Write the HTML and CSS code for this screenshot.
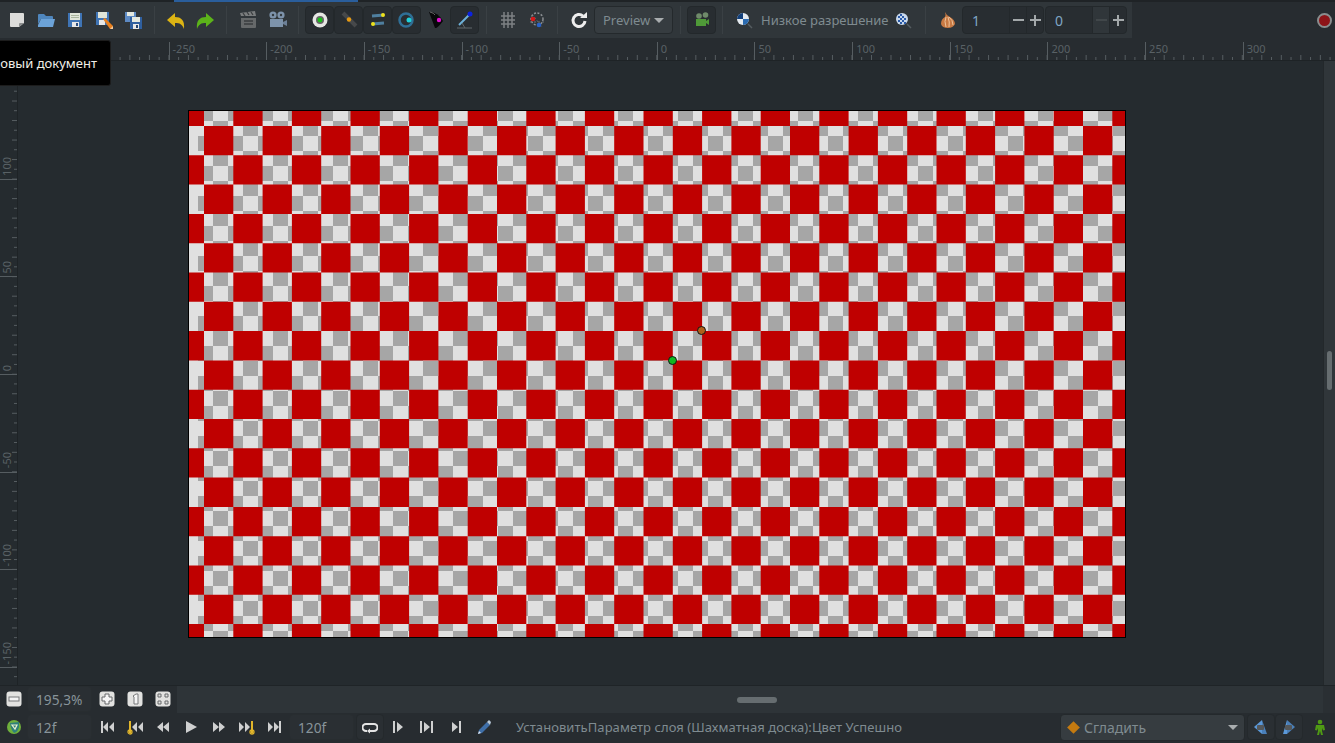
FILE: index.html
```html
<!DOCTYPE html>
<html lang="ru">
  <head>
    <meta charset="UTF-8" />
    <title>Synfig Studio</title>
    <link rel="stylesheet" href="styles.css">
  </head>
  <body>
    <div class="app">
      <div class="tab-strip"><div class="tab-active"></div></div>

      <div class="top-row">
        <div class="toolbar">
          <div class="tool"><svg viewBox="0 0 20 20"><path d="M3 3h13q1 0 1 1v9l-5 4H4q-1 0-1-1z" fill="#dcdcda"/><path d="M12 17v-3q0-1 1-1h4z" fill="#8a8c8c"/></svg></div>
          <div class="tool"><svg viewBox="0 0 20 20"><path d="M2 5q0-1 1-1h5l2 2h6q1 0 1 1v2H5l-3 5z" fill="#4f86bd"/><path d="M5 9h14l-2 8H2v-2z" fill="#6ca3d8"/></svg></div>
          <div class="tool"><svg viewBox="0 0 20 20"><path d="M3 3h14v14H3z" fill="#3f74b5"/><path d="M5 3h10v7H5z" fill="#dfe4d8"/><path d="M6 5h8v1H6zM6 7h8v1H6z" fill="#a8b49c"/><path d="M7 12h7v5H7z" fill="#e8e8e8"/><path d="M11 13h2v3h-2z" fill="#2c4f80"/></svg></div>
          <div class="tool"><svg viewBox="0 0 20 20"><path d="M2 2h13v13H2z" fill="#3f74b5"/><path d="M4 2h9v6H4z" fill="#dfe4d8"/><path d="M5 10h6v5H5z" fill="#e8e8e8"/><path d="M9 9l2-1 8 8-1 3-2 0z" fill="#e8801e"/><path d="M16 19l3-3 0 3z" fill="#efc9a0"/></svg></div>
          <div class="tool"><svg viewBox="0 0 20 20"><path d="M2 2h11v10H2z" fill="#5d8ac4"/><path d="M4 2h7v4H4z" fill="#e4e8e0"/><path d="M7 7h12v12H7z" fill="#2f5f9f"/><path d="M9 7h8v5H9z" fill="#e4e8e0"/><path d="M10 14h6v5h-6z" fill="#e8e8e8"/><path d="M13 15h2v3h-2z" fill="#24446f"/></svg></div>
          <div class="sep"></div>
          <div class="tool"><svg viewBox="0 0 20 20"><path d="M9 2v4c6 0 10 3 9 12-2-5-4-6-9-6v4L1 9z" fill="#dcb414" transform="translate(0 1)"/></svg></div>
          <div class="tool"><svg viewBox="0 0 20 20"><path d="M11 2v4C5 6 1 9 2 18c2-5 4-6 9-6v4l8-7z" fill="#5cb31a" transform="translate(0 1)"/></svg></div>
          <div class="sep"></div>
          <div class="tool"><svg viewBox="0 0 20 20"><path d="M3 8h15v9q0 1-1 1H4q-1 0-1-1z" fill="#66696a"/><path d="M2 3l15-2 1 5H3z" fill="#7a7d7e"/><path d="M5 3l2 3M9 2l2 3M13 2l2 3M6 11h9M6 14h9" stroke="#3a3d3f" stroke-width="1.300" fill="none"/></svg></div>
          <div class="tool"><svg viewBox="0 0 20 20"><circle cx="6" cy="5" r="3.600" fill="#7d93ab"/><circle cx="14" cy="5" r="3.600" fill="#7d93ab"/><circle cx="6" cy="5" r="1.200" fill="#333a3f"/><circle cx="14" cy="5" r="1.200" fill="#333a3f"/><path d="M3 9h13v8H3z" fill="#7d93ab"/><path d="M16 12l4-2v6l-4-2z" fill="#6c8097"/></svg></div>
          <div class="sep"></div>
          <div class="tool tool-on"><svg viewBox="0 0 20 20"><circle cx="10" cy="10" r="7.500" fill="#e6e6e4"/><circle cx="10" cy="10" r="4" fill="#666"/><circle cx="10" cy="10" r="2.400" fill="#18c018"/></svg></div>
          <div class="tool tool-on"><svg viewBox="0 0 20 20"><path d="M4 3l13 13" stroke="#46484a" stroke-width="4"/><circle cx="10" cy="9.500" r="2.200" fill="#e89a10"/></svg></div>
          <div class="tool tool-on"><svg viewBox="0 0 20 20"><path d="M4 6l12-1M4 14l12-1" stroke="#4f7f9f" stroke-width="3"/><circle cx="15" cy="5" r="2" fill="#eee21a"/><circle cx="5" cy="14" r="2" fill="#eee21a"/></svg></div>
          <div class="tool tool-on"><svg viewBox="0 0 20 20"><circle cx="9" cy="10" r="6.500" fill="none" stroke="#2f6f96" stroke-width="2.500"/><circle cx="12" cy="10" r="2.500" fill="#20d0d8"/></svg></div>
          <div class="tool"><svg viewBox="0 0 20 20"><path d="M3 2q9 0 14 9-6 8-8 7Q6 10 3 2z" fill="#08080a"/><path d="M4 2q4 1 5 3" stroke="#666" fill="none"/><circle cx="13" cy="10" r="2.200" fill="#e010d0"/></svg></div>
          <div class="tool tool-on"><svg viewBox="0 0 20 20"><path d="M4 15L14 5" stroke="#6cb0d8" stroke-width="2"/><circle cx="15" cy="4" r="2.500" fill="#0c22e0"/><path d="M2 18h15M10 18l-3-5" stroke="#60686c" fill="none"/></svg></div>
          <div class="sep"></div>
          <div class="tool"><svg viewBox="0 0 20 20"><path d="M3 6h14M3 10h14M3 14h14M6 2v16M10 2v16M14 2v16" stroke="#7d8184" stroke-width="1.500" fill="none"/></svg></div>
          <div class="tool"><svg viewBox="0 0 20 20"><circle cx="10" cy="9" r="6" fill="none" stroke="#8b8f92" stroke-width="1.500" stroke-dasharray="2 1.500"/><path d="M3 12h16M5 4l10 13" stroke="#6a6e70" stroke-dasharray="2 2"/><circle cx="6" cy="9" r="2.300" fill="#d81818"/><circle cx="12" cy="15" r="2.300" fill="#2a62c8"/></svg></div>
          <div class="sep sep-narrow"></div>
          <div class="tool"><svg viewBox="0 0 20 20"><path d="M16 11a6 6 0 1 1-2-5" fill="none" stroke="#eeeeee" stroke-width="3"/><path d="M11 8h7V2z" fill="#eeeeee"/></svg></div>
          <div class="combo combo-preview"><span>Preview</span><i class="caret"></i></div>
          <div class="sep"></div>
          <div class="tool tool-on"><svg viewBox="0 0 20 20"><circle cx="7" cy="6" r="2.800" fill="#6f8a6a"/><circle cx="13.500" cy="5" r="2.800" fill="#6f8a6a"/><path d="M4 9h10v7H4z" fill="#4f9a38"/><path d="M14 11l3-2v6l-3-2z" fill="#4f9a38"/></svg></div>
          <div class="sep sep-narrow"></div>
          <div class="tool"><svg viewBox="0 0 20 20"><circle cx="9" cy="9" r="6" fill="#e4eaf0"/><path d="M9 3a6 6 0 0 0-6 6h6z" fill="#123f7a"/><path d="M9 9h6a6 6 0 0 1-6 6z" fill="#2a6ab0"/><path d="M14 14l4 4" stroke="#555c60" stroke-width="1.500"/></svg></div>
          <span class="res-label">Низкое разрешение</span>
          <div class="tool"><svg viewBox="0 0 20 20"><circle cx="9" cy="9" r="6" fill="#c8d8ec"/><path d="M5 6h2v2H5zM9 6h2v2H9zM7 8h2v2H7zM11 8h2v2h-2zM5 10h2v2H5zM9 10h2v2H9zM7 12h2v2H7z M7 4h2v2H7z M11 12h2v2h-2z" fill="#2a5aa8"/><path d="M14 14l4 4" stroke="#555c60" stroke-width="1.500"/></svg></div>
          <div class="sep sep-onion"></div>
          <div class="tool"><svg viewBox="0 0 20 20"><path d="M7 2q1 3 5 5 5 3 5 7-2 4-7 4-6 0-7-4 0-5 4-7 1-2 0-5z" fill="#c87a44"/><path d="M8 7Q6 11 8 17M10 7q2 5 1 10M11 7q4 3 4 8" stroke="#eec39a" fill="none"/></svg></div>
          <div class="spin">
            <span class="spin-val">1</span>
            <span class="spin-btn spin-minus"></span>
            <span class="spin-btn spin-plus"></span>
          </div>
          <div class="spin">
            <span class="spin-val">0</span>
            <span class="spin-btn spin-minus spin-off"></span>
            <span class="spin-btn spin-plus"></span>
          </div>
        </div>
        <div class="rec-area"><div class="rec"></div></div>
      </div>

      <div class="h-ruler">
        <div class="mark">-300</div>
        <div class="mark">-250</div>
        <div class="mark">-200</div>
        <div class="mark">-150</div>
        <div class="mark">-100</div>
        <div class="mark">-50</div>
        <div class="mark">0</div>
        <div class="mark">50</div>
        <div class="mark">100</div>
        <div class="mark">150</div>
        <div class="mark">200</div>
        <div class="mark">250</div>
        <div class="mark">300</div>
      </div>

      <div class="middle">
        <div class="v-ruler">
          <div class="v-first"></div>
          <div class="v-mark"><span>100</span></div>
          <div class="v-mark"><span>50</span></div>
          <div class="v-mark"><span>0</span></div>
          <div class="v-mark"><span>-50</span></div>
          <div class="v-mark"><span>-100</span></div>
          <div class="v-mark"><span>-150</span></div>
        </div>
        <div class="work">
          <div class="canvas" id="canvas">
            <div class="dot dot-green"></div>
            <div class="dot dot-orange"></div>
          </div>
        </div>
        <div class="v-scroll"><div class="v-thumb"></div></div>
      </div>

      <div class="scroll-row">
        <div class="zoom-tools">
          <div class="slot"><svg class="white-btn" viewBox="0 0 16 16"><rect x="0.500" y="0.500" width="15" height="15" rx="3" fill="#e2e2e0"/><rect x="3" y="6" width="10" height="4" fill="#f4f4f4" stroke="#77797a"/></svg></div>
          <div class="value-box value-zoom">195,3%</div>
          <div class="slot"><svg class="white-btn" viewBox="0 0 16 16"><rect x="0.500" y="0.500" width="15" height="15" rx="3" fill="#e2e2e0"/><path d="M6 3h4v3h3v4h-3v3H6v-3H3V6h3z" fill="#f6f6f6" stroke="#66686a"/></svg></div>
          <div class="slot"><svg class="white-btn" viewBox="0 0 16 16"><rect x="0.500" y="0.500" width="15" height="15" rx="3" fill="#e2e2e0"/><path d="M6 5l3-2h2v10H7V6z" fill="#f4f4f4" stroke="#77797a"/></svg></div>
          <div class="slot"><svg class="white-btn" viewBox="0 0 16 16"><rect x="0.500" y="0.500" width="15" height="15" rx="3" fill="#e2e2e0"/><path d="M3 3h3v3H3zM10 3h3v3h-3zM3 10h3v3H3zM10 10h3v3h-3z" fill="none" stroke="#66686a"/></svg></div>
        </div>
        <div class="h-scroll"><div class="h-thumb"></div></div>
        <div class="scroll-corner"></div>
      </div>

      <div class="status">
        <div class="slot"><svg viewBox="0 0 16 16"><circle cx="8" cy="8" r="7" fill="#6fb03c"/><path d="M4 4l9-1v5q-1 5-5 6-3-3-4-10z" fill="#2f7f7a"/><path d="M6 6h5l-2 4z" fill="none" stroke="#e8f0d0" stroke-width="1.200"/></svg></div>
        <div class="value-box value-time">12f</div>
        <div class="slot"><svg class="tp" viewBox="0 0 16 16"><path d="M2 2h2v12H2zM9 3v10L4 8zM15 3v10L10 8z"/></svg></div>
        <div class="slot"><svg class="tp" viewBox="0 0 16 16"><path d="M2 2h2v12H2z" fill="#e2b62a"/><circle cx="3" cy="13" r="2" fill="none" stroke="#e2b62a" stroke-width="1.300"/><path d="M10 3v10L5 8zM16 3v10l-5-5z"/></svg></div>
        <div class="slot"><svg class="tp" viewBox="0 0 16 16"><path d="M8 3v10L2 8zM14 3v10L8 8z"/></svg></div>
        <div class="slot"><svg class="tp" viewBox="0 0 16 16"><path d="M3 2v12l11-6z"/></svg></div>
        <div class="slot"><svg class="tp" viewBox="0 0 16 16"><path d="M2 3v10l6-5zM8 3v10l6-5z"/></svg></div>
        <div class="slot"><svg class="tp" viewBox="0 0 16 16"><path d="M0 3v10l5-5zM6 3v10l5-5z"/><path d="M12 2h2v12h-2z" fill="#e2b62a"/><circle cx="13" cy="13" r="2" fill="none" stroke="#e2b62a" stroke-width="1.300"/></svg></div>
        <div class="slot"><svg class="tp" viewBox="0 0 16 16"><path d="M1 3v10l5-5zM7 3v10l5-5zM12 2h2v12h-2z"/></svg></div>
        <div class="value-box value-end">120f</div>
        <div class="slot slot-on slot-loop"><svg viewBox="0 0 16 16"><path d="M5 12H4a3.500 3.500 0 0 1 0-7h8a3.500 3.500 0 0 1 0 7H7" fill="none" stroke="#e4e4e4" stroke-width="2"/><path d="M8 9.500v5L5 12z" fill="#e4e4e4"/></svg></div>
        <div class="slot"><svg class="tp" viewBox="0 0 16 16"><path d="M3 2h2v12H3zM7 3v10l6-5z"/></svg></div>
        <div class="slot slot-wide"><svg class="tp" viewBox="0 0 16 16"><path d="M1 2h2v12H1zM5 3v10l6-5zM12 2h2v12h-2z"/></svg></div>
        <div class="slot slot-wide"><svg class="tp" viewBox="0 0 16 16"><path d="M4 3v10l6-5zM11 2h2v12h-2z"/></svg></div>
        <div class="slot"><svg viewBox="0 0 16 16"><path d="M2 15l1-4 8-8 3 3-8 8z" fill="#3f6fa8"/><path d="M11 3l2-2 2 2-1 3z" fill="#b8c8d8"/><path d="M2 15l1-3 2 2z" fill="#dfe6ee"/></svg></div>
        <div class="message">УстановитьПараметр слоя (Шахматная доска):Цвет Успешно</div>
        <div class="combo combo-blend">
          <i class="diamond"></i>
          <span>Сгладить</span>
          <i class="caret"></i>
        </div>
        <div class="slot slot-on"><svg viewBox="0 0 16 16"><path d="M9 1v14L1 8z" fill="#5b98d8"/><path d="M9 1l5 14H9z" fill="#4a7fb8"/><rect x="4" y="6" width="7" height="5" rx="1" fill="#55585a"/></svg></div>
        <div class="slot slot-on"><svg viewBox="0 0 16 16"><path d="M6 1v14l8-7z" fill="#4a7fb8"/><path d="M6 1L2 15h4z" fill="#5b98d8"/><rect x="4" y="6" width="7" height="5" rx="1" fill="#55585a"/></svg></div>
        <div class="slot slot-runner"><svg viewBox="0 0 16 16"><circle cx="8" cy="3" r="2.300" fill="#4f9a14"/><path d="M4 6h8l1 5-2 .5L10 9v3l1 4H9L8 12l-1 4H5l1-4V9l-1 2.500L3 11z" fill="#4f9a14"/></svg></div>
      </div>
    </div>

    <div class="tooltip">Новый документ</div>
    <script src="canvas.js"></script>
  </body>
</html>
```

FILE: styles.css
```css
* {
  box-sizing: border-box;
}

html,
body {
  margin: 0;
  height: 100%;
  overflow: hidden;
}

body {
  font-family: "Noto Sans", sans-serif;
  font-size: 13px;
  color: #7f8b90;
  background-color: #252b2f;
}

.app {
  display: flex;
  flex-direction: column;
  height: 743px;
}

/* top */
.tab-strip {
  height: 2px;
  background-color: #1f2326;
  padding-left: 174px;
}
.tab-active {
  width: 184px;
  height: 2px;
  background-color: #2a5e9c;
}

.top-row {
  display: flex;
  height: 36px;
  background-color: #272c30;
}

.toolbar {
  display: flex;
  align-items: center;
  width: 1132px;
  padding-left: 2px;
  background-color: #30363a;
}

.tool {
  flex: 0 0 29px;
  height: 28px;
  display: flex;
  align-items: center;
  justify-content: center;
}
.tool svg {
  width: 20px;
  height: 20px;
}
.tool-on {
  background-color: #282d31;
  border: 1px solid #23282b;
  border-radius: 4px;
}

.sep {
  flex: 0 0 14px;
  height: 28px;
  background: linear-gradient(#3a4044, #3a4044) center / 1px 100% no-repeat;
}
.sep-narrow {
  flex-basis: 13px;
}
.sep-onion {
  flex-basis: 15.5px;
}

.combo {
  display: flex;
  align-items: center;
  background-color: #363c40;
  border: 1px solid #24292c;
  border-radius: 4px;
  height: 28px;
  color: #7f8b90;
}
.combo-preview {
  flex: 0 0 79px;
  padding: 0 8px;
  justify-content: space-between;
  margin-left: 1px;
}
.caret {
  width: 0;
  height: 0;
  border-left: 5px solid transparent;
  border-right: 5px solid transparent;
  border-top: 5px solid #a9adaf;
}

.res-label {
  flex: 0 0 124.5px;
  margin-left: 3px;
  white-space: nowrap;
}

.spin {
  flex: 0 0 82px;
  margin-right: 1px;
  height: 28px;
  display: flex;
  align-items: center;
  background-color: #282d31;
  border: 1px solid #23282b;
  border-radius: 4px;
  font-size: 14px;
}
.spin-val {
  flex: 1;
  padding-left: 9px;
  color: #7fa6c4;
}
.spin-btn {
  flex: 0 0 17px;
  height: 26px;
  border-left: 1px solid #23282b;
  background-repeat: no-repeat;
  background-position: center;
}
.spin-minus {
  background-image: linear-gradient(#a3a8aa, #a3a8aa);
  background-size: 11px 2px;
}
.spin-plus {
  background-image: linear-gradient(#a3a8aa, #a3a8aa), linear-gradient(#a3a8aa, #a3a8aa);
  background-size: 11px 2px, 2px 11px;
}
.spin-off {
  background-image: linear-gradient(#41474a, #41474a);
  background-color: #30363a;
}

.rec-area {
  flex: 1;
  display: flex;
  align-items: center;
  justify-content: flex-end;
  padding-right: 3px;
}
.rec {
  width: 15px;
  height: 15px;
  border-radius: 50%;
  background-color: #8e1418;
  border: 2px solid #8a8d8e;
}

/* rulers */
.h-ruler {
  display: flex;
  flex: 0 0 23px;
  padding: 4px 0 0 70.9px;
  overflow: hidden;
  border-bottom: 1px solid #1e2326;
  background-color: #272c30;
  background-image: linear-gradient(to right, #565d61 1px, transparent 1px),
    linear-gradient(to right, #565d61 1px, transparent 1px);
  background-size: 19.53px 6px, 19.53px 4px;
  background-position: 12.3px 100%, 2.5px 100%;
  background-repeat: repeat-x;
  background-origin: border-box;
}
.mark {
  flex: 0 0 97.66px;
  padding-left: 3px;
  border-left: 1px solid #565d61;
  font-size: 11px;
  line-height: 13px;
  color: #596165;
}

.middle {
  flex: 1;
  display: flex;
  min-height: 0;
}

.v-ruler {
  flex: 0 0 18px;
  display: flex;
  flex-direction: column;
  border-right: 1px solid #1e2326;
  background-image: linear-gradient(#565d61 1px, transparent 1px),
    linear-gradient(#565d61 1px, transparent 1px);
  background-size: 5px 19.53px, 3px 19.53px;
  background-position: 100% 0.5px, 100% 10.2px;
  background-repeat: repeat-y;
  background-origin: content-box;
}
.v-first {
  flex: 0 0 21px;
  border-bottom: 1px solid #565d61;
}
.v-mark {
  flex: 0 0 97.66px;
  display: flex;
  align-items: flex-end;
  padding-bottom: 3px;
  border-bottom: 1px solid #565d61;
}
.v-mark span {
  writing-mode: vertical-rl;
  transform: rotate(180deg);
  font-size: 11px;
  line-height: 13px;
  color: #596165;
}

.work {
  flex: 1;
  padding: 49px 0 0 170px;
}

.canvas {
  position: relative;
  width: 938px;
  height: 528px;
  border: 1px solid #000;
  background-color: #e0e0e0;
}
.canvas svg {
  display: block;
}

.dot {
  position: absolute;
  width: 9px;
  height: 9px;
  border-radius: 50%;
  border: 1px solid #141414;
}
.dot-green {
  left: 479px;
  top: 245px;
  background-color: #10b820;
}
.dot-orange {
  left: 508px;
  top: 215px;
  background-color: #b0601a;
}

.v-scroll {
  flex: 0 0 12px;
  padding: 290px 3px 0;
  background-color: #30363a;
  border-left: 1px solid #23282b;
}
.v-thumb {
  height: 39px;
  border-radius: 3px;
  background-color: #666d70;
}

/* bottom */
.scroll-row {
  display: flex;
  flex: 0 0 28px;
  border-top: 1px solid #1f2427;
}
.zoom-tools {
  flex: 0 0 177px;
  display: flex;
  align-items: center;
  background-color: #272c30;
  padding-bottom: 1px;
}
.h-scroll {
  flex: 1;
  display: flex;
  justify-content: center;
  align-items: center;
  background-color: #2e3438;
  padding-left: 14px;
}
.h-thumb {
  width: 40px;
  height: 6px;
  border-radius: 3px;
  background-color: #666d70;
}
.scroll-corner {
  flex: 0 0 12px;
  background-color: #2a2f33;
}

.slot {
  flex: 0 0 28px;
  height: 26px;
  display: flex;
  align-items: center;
  justify-content: center;
}
.slot svg {
  width: 16px;
  height: 16px;
}
.slot-on {
  background-color: #2a2f33;
  border: 1px solid #24292c;
  border-radius: 4px;
}
.slot-loop {
  margin-left: 2px;
}
.slot-wide {
  flex-basis: 29px;
}
.slot-runner {
  margin-left: 3px;
}

.tp path {
  fill: #cfd0d0;
}
.tp path[fill] {
  fill: #e2b62a;
}

.value-box {
  flex: 0 0 65px;
  height: 26px;
  line-height: 26px;
  padding-left: 8px;
  background-color: #2a2f33;
  border: 1px solid #282d30;
  border-radius: 4px;
  color: #88949a;
  font-size: 13.7px;
}
.value-zoom {
  margin: 0 1px 0 -1px;
}
.value-time {
  margin: 0 1px 0 -1px;
}

.status {
  flex: 0 0 30px;
  display: flex;
  align-items: center;
  padding-bottom: 2px;
  background-color: #272c30;
}

.message {
  flex: 0 0 562px;
  padding-left: 18px;
  white-space: nowrap;
  letter-spacing: 0.06px;
}

.combo-blend {
  flex: 0 0 185px;
  height: 27px;
  padding: 0 6px;
  margin-right: 2px;
  color: #7f8b90;
}
.combo-blend span {
  flex: 1;
  font-size: 14px;
}
.diamond {
  width: 9px;
  height: 9px;
  margin: 0 6px 0 2px;
  background-color: #c47a10;
  transform: rotate(45deg);
}

.tooltip {
  position: absolute;
  top: 40px;
  left: -30px;
  width: 141px;
  height: 46px;
  line-height: 45px;
  padding-right: 13px;
  text-align: right;
  white-space: nowrap;
  background-color: #000;
  border: 1px solid #1c1c1c;
  border-radius: 3px;
  color: #f0efe8;
}
```

FILE: canvas.js
```js
// checker layer: small grey squares (15px) under the big red ones (29.3px)
const W = 936;
const H = 526;

function squares(startX, startY, size) {
  let d = "";
  for (let j = 0; startY + j * size < H; j++) {
    for (let i = 0; startX + i * size < W; i++) {
      if ((i + j) % 2 === 0) {
        d += `M${startX + i * size} ${startY + j * size}h${size}v${size}h-${size}z`;
      }
    }
  }
  return d;
}

const canvas = document.getElementById("canvas");
canvas.insertAdjacentHTML(
  "afterbegin",
  `<svg width="${W}" height="${H}" viewBox="0 0 ${W} ${H}">
    <path fill="#a6a6a6" d="${squares(9, -5, 15)}"/>
    <path fill="#bf0000" d="${squares(-14.3, -14.3, 29.3)}"/>
  </svg>`
);
```
